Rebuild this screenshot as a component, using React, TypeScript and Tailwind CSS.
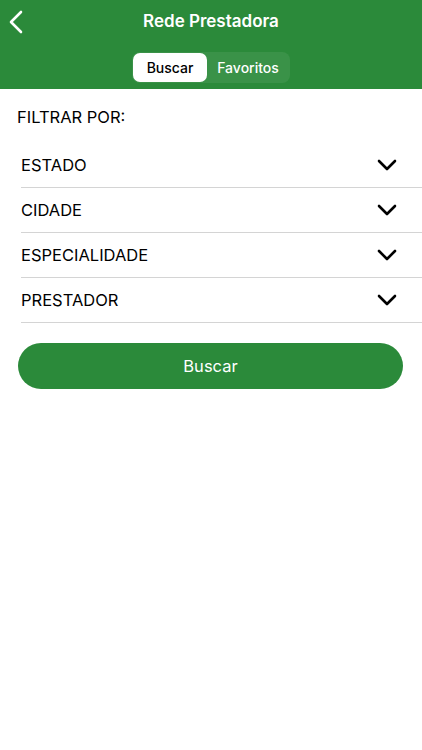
const filters = ['ESTADO', 'CIDADE', 'ESPECIALIDADE', 'PRESTADOR'];

function Chevron() {
  return (
    <svg width="20" height="12" viewBox="0 0 20 12" fill="none">
      <polyline
        points="2,2 10,10 18,2"
        stroke="black"
        strokeWidth="2.6"
        strokeLinecap="round"
        strokeLinejoin="round"
      />
    </svg>
  );
}

function BackArrow() {
  return (
    <svg width="14" height="24" viewBox="0 0 14 24" fill="none">
      <polyline
        points="12,2 2,12 12,22"
        stroke="white"
        strokeWidth="2.6"
        strokeLinecap="round"
        strokeLinejoin="round"
      />
    </svg>
  );
}

export default function App() {
  return (
    <div className="min-h-[750px] bg-white font-['Inter',sans-serif] text-black">
      {/* Header */}
      <header className="bg-[#2b8a3a] pb-[6px]">
        <div className="relative flex h-[42px] items-center justify-center">
          <button className="absolute left-[9px] top-[10px]">
            <BackArrow />
          </button>
          <h1 className="pt-[1px] text-[17px] font-semibold text-white">Rede Prestadora</h1>
        </div>
        <div className="mt-[10px] flex justify-center">
          <div className="flex h-[31px] items-center rounded-[8px] bg-white/[0.07] p-[1px]">
            <button className="flex h-[29px] w-[74px] items-center justify-center rounded-[7px] bg-white text-[14px] font-medium text-black">
              Buscar
            </button>
            <button className="flex h-[29px] w-[82px] items-center justify-center text-[14px] font-medium text-white">
              Favoritos
            </button>
          </div>
        </div>
      </header>

      {/* Filters */}
      <main className="pt-[18px]">
        <p className="pl-[17px] text-[16.5px] leading-[20px]">FILTRAR POR:</p>
        <ul className="mt-[16px] pl-[21px]">
          {filters.map((f) => (
            <li
              key={f}
              className="flex h-[45px] items-center justify-between border-b border-[#d4d4d4] pr-[25px]"
            >
              <span className="text-[16.5px]">{f}</span>
              <Chevron />
            </li>
          ))}
        </ul>
        <div className="pl-[18px] pr-[19px] pt-[20px]">
          <button className="h-[46px] w-full rounded-full bg-[#2b8a3a] text-[16.5px] text-white">
            Buscar
          </button>
        </div>
      </main>
    </div>
  );
}
